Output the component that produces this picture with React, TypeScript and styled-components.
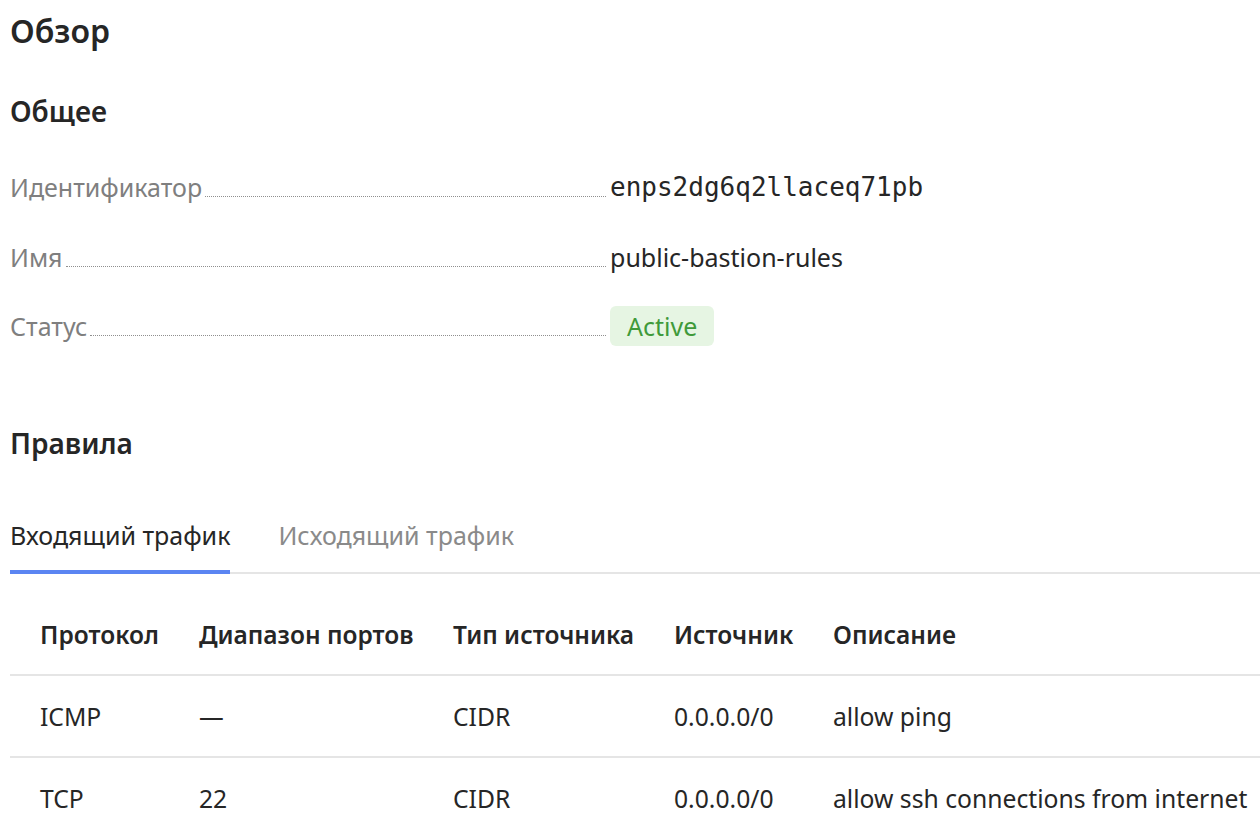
import React from "react";
import styled, { createGlobalStyle } from "styled-components";

const Global = createGlobalStyle`
  html, body { margin: 0; padding: 0; background: #fff; }
  body { font-family: "Noto Sans", "Open Sans", sans-serif; color: #262626; }
`;

const Page = styled.div`
  padding: 0 0 0 10px;
  width: 1250px;
  overflow: hidden;
`;

const Title = styled.h1`
  margin: 0;
  height: 60px;
  display: flex;
  align-items: center;
  font-size: 32px;
  font-weight: 600;
`;

const SectionTitle = styled.h2<{ $top: number }>`
  margin: ${(p) => p.$top}px 0 0;
  height: 40px;
  display: flex;
  align-items: center;
  font-size: 28px;
  font-weight: 600;
`;

const Props = styled.div`
  margin-top: 36px;
  display: flex;
  flex-direction: column;
  gap: 29.5px;
  width: 1000px;
`;

const PropRow = styled.div`
  display: grid;
  grid-template-columns: 596px 1fr;
  align-items: center;
  height: 40px;
`;

const Label = styled.div`
  display: flex;
  align-items: baseline;
  font-size: 25px;
  color: #7f7f7f;
  &::after {
    content: "";
    flex: 1;
    margin-left: 3px;
    border-bottom: 1px dotted #8f8f8f;
  }
`;

const Value = styled.div<{ $mono?: boolean }>`
  padding-left: 4px;
  font-size: ${(p) => (p.$mono ? "26px" : "25px")};
  font-family: ${(p) => (p.$mono ? '"DejaVu Sans Mono", monospace' : "inherit")};
  color: #262626;
`;

const Badge = styled.span`
  display: inline-flex;
  align-items: center;
  height: 40px;
  padding: 0 17px;
  border-radius: 6px;
  background: #e6f5e3;
  color: #3f9a3a;
  font-size: 25px;
`;

const Tabs = styled.div`
  margin-top: 35px;
  display: flex;
  gap: 48px;
  border-bottom: 2px solid #e5e5e5;
`;

const Tab = styled.div<{ $active?: boolean }>`
  position: relative;
  height: 74px;
  display: flex;
  align-items: center;
  font-size: 25px;
  color: ${(p) => (p.$active ? "#262626" : "#8a8a8a")};
  &::after {
    content: "";
    position: absolute;
    left: 0;
    right: 0;
    bottom: -2px;
    height: 4px;
    background: ${(p) => (p.$active ? "#5b85f2" : "transparent")};
  }
`;

const Table = styled.div`
  margin-top: 20px;
`;

const TRow = styled.div<{ $head?: boolean }>`
  display: grid;
  grid-template-columns: 159px 254px 221px 159px 1fr;
  align-items: center;
  height: 80px;
  padding-left: 30px;
  border-bottom: 2px solid #e5e5e5;
  font-size: ${(p) => (p.$head ? "24.5px" : "24.7px")};
  font-weight: ${(p) => (p.$head ? 600 : 400)};
  color: #262626;
  white-space: nowrap;
  &:last-child { border-bottom: none; }
`;

const rows = [
  ["ICMP", "—", "CIDR", "0.0.0.0/0", "allow ping"],
  ["TCP", "22", "CIDR", "0.0.0.0/0", "allow ssh connections from internet"],
];

export default function App() {
  return (
    <Page>
      <Global />
      <Title>Обзор</Title>
      <SectionTitle $top={31}>Общее</SectionTitle>
      <Props>
        <PropRow>
          <Label>Идентификатор</Label>
          <Value $mono>enps2dg6q2llaceq71pb</Value>
        </PropRow>
        <PropRow>
          <Label>Имя</Label>
          <Value>public-bastion-rules</Value>
        </PropRow>
        <PropRow>
          <Label>Статус</Label>
          <Value><Badge>Active</Badge></Value>
        </PropRow>
      </Props>
      <SectionTitle $top={77}>Правила</SectionTitle>
      <Tabs>
        <Tab $active>Входящий трафик</Tab>
        <Tab>Исходящий трафик</Tab>
      </Tabs>
      <Table>
        <TRow $head>
          <div>Протокол</div>
          <div>Диапазон портов</div>
          <div>Тип источника</div>
          <div>Источник</div>
          <div>Описание</div>
        </TRow>
        {rows.map((r, i) => (
          <TRow key={i}>
            {r.map((c, j) => (
              <div key={j}>{c}</div>
            ))}
          </TRow>
        ))}
      </Table>
    </Page>
  );
}
